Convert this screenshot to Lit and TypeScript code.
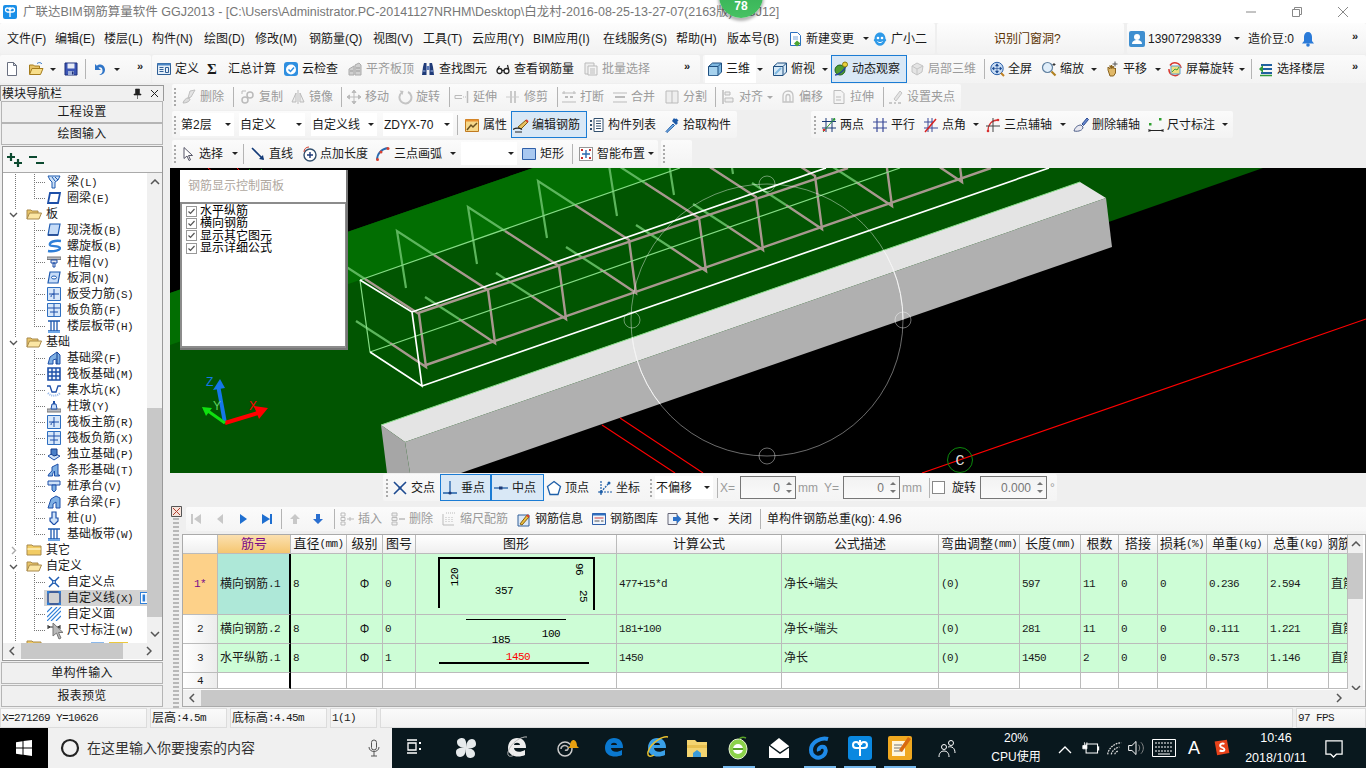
import { LitElement, html, css, svg } from 'lit';
import { customElement } from 'lit/decorators.js';

type Item = {
  x: number; ic?: string; t?: string; dd?: boolean; dis?: boolean; sel?: boolean; sep?: boolean;
  grip?: boolean; box?: string; bw?: number; input?: string; check?: boolean; label?: string; more?: boolean; cls?: string;
};
type Block = { from: number; to: number; plain?: boolean; items: Item[] };

const ICONS: Record<string, unknown> = {
  new: svg`<path d="M3.500 1.500h6l3 3v10h-9z" fill="#fff" stroke="#6a7080"/><path d="M9.500 1.500v3h3z" fill="#d8dce8" stroke="#6a7080"/>`,
  open: svg`<path d="M1.500 13V4h4l1 1h5v2" fill="#e6c268" stroke="#a57c1c"/><path d="M1.500 13.500l2.500-6h11l-2.500 6z" fill="#f7de8a" stroke="#a57c1c"/><path d="M9 2.500c2-1.500 4-1 5 .5" fill="none" stroke="#3a7ac8"/>`,
  save: svg`<path d="M2 2h12v12H2z" fill="#3b55b5" stroke="#1d2e78"/><path d="M4.500 2.500h7v5h-7z" fill="#e8ecf6"/><path d="M5 10h6v4H5z" fill="#9fb0d8"/><path d="M9 10.500h1.500v3H9z" fill="#1d2e78"/>`,
  undo: svg`<path d="M4 3v6h6L7.500 6.800C9.500 5.500 12 7 11.500 10.500c-.3 1.800-2 3-3.500 3.500 3.500.5 6-2.200 6-5.200 0-4.800-5-7-8.200-4z" fill="#2f75c8"/>`,
  def: svg`<path d="M1.500 2.500h13v11h-13z" fill="#e4eef8" stroke="#2f5f96"/><path d="M1.500 2.500h13v2h-13z" fill="#4a86c5"/><path d="M3.500 6.500h4M3.500 8.500h4M3.500 10.500h4M9.500 6.500h3v5h-3z" fill="none" stroke="#2f5f96"/>`,
  cloud: svg`<rect x="1" y="1" width="14" height="14" rx="3" fill="#2f8fe0"/><circle cx="8" cy="8.500" r="5" fill="#fff"/><path d="M5.500 8.500l2 2 3.500-4" fill="none" stroke="#2f8fe0" stroke-width="1.500"/>`,
  flat: svg`<path d="M2 14V8l5-3v9zM8 14V4l4-2 2 2v10z" fill="#d0d0d0" stroke="#aaa"/><path d="M3 10h3M9 7h4M9 10h4" stroke="#999"/>`,
  binoc: svg`<path d="M2 14l1-8 1-4h2.500v12zM14 14l-1-8-1-4H9.500v12z" fill="#1f3a78"/><path d="M6.500 5h3v4h-3z" fill="#5d7ab8"/><path d="M3 10h2.500M10.500 10H13" stroke="#9fb8e8"/>`,
  glasses: svg`<circle cx="4.500" cy="10" r="2.500" fill="#fff" stroke="#222" stroke-width="1.300"/><circle cx="11.500" cy="10" r="2.500" fill="#fff" stroke="#222" stroke-width="1.300"/><path d="M7 9.500h2M2.500 8l2-3M13.500 8l-1-4" fill="none" stroke="#222" stroke-width="1.200"/>`,
  batch: svg`<path d="M2 2h9v11H2z" fill="#eee" stroke="#bbb"/><path d="M5 5h9v9H5z" fill="#f4f4f4" stroke="#bbb"/><path d="M7 8h5M7 10h5M7 12h5" stroke="#bbb"/>`,
  cube: svg`<path d="M1.500 5.500l4-3.500h9v9l-3.500 3.500h-9.500z" fill="#7fb8e0" stroke="#1f4f80"/><path d="M2 6h8.800v8.200H2z" fill="#a6d2ee"/><path d="M1.500 5.500h9.500v9M11 5.500l3.500-3.500" fill="none" stroke="#1f4f80"/>`,
  top: svg`<path d="M1.500 5.500l4-3.500h9v9l-3.500 3.500h-9.500z" fill="#d6e8f6" stroke="#1f4f80"/><path d="M3 13l6-6" stroke="#7fb8e0" stroke-width="2"/><path d="M1.500 5.500h9.500v9M11 5.500l3.500-3.500" fill="none" stroke="#1f4f80"/>`,
  orbit: svg`<circle cx="7" cy="9" r="5" fill="#4f9c2f" stroke="#1f6020"/><path d="M2 14c4 0 10-5 12-11" fill="none" stroke="#1f3fa0" stroke-width="1.400"/><circle cx="12" cy="3.500" r="2.500" fill="#e8d03a" stroke="#8a7a10"/>`,
  local3d: svg`<path d="M3 5l5-3 6 3-1 6-5 3-5-3z" fill="#e4e4e4" stroke="#c4c4c4"/><path d="M3 5l5 3 6-3M8 8v6" fill="none" stroke="#c4c4c4"/>`,
  zoomall: svg`<circle cx="8" cy="7.500" r="6.200" fill="#c8dcf4" stroke="#2a5fa8"/><path d="M8 3v9M3.500 7.500h9M8 2.800L6.500 5h3zM8 12.200L6.500 10h3zM3.200 7.500L5 6v3zM12.800 7.500L11 6v3z" fill="#1d4a90" stroke="#1d4a90" stroke-width=".6"/><path d="M12 12l3 3" stroke="#c08020" stroke-width="2"/>`,
  zoom: svg`<circle cx="6.500" cy="6.500" r="5" fill="#e0eefa" stroke="#6080a0" stroke-width="1.200"/><path d="M10.500 10.500l4 4" stroke="#b08020" stroke-width="2.200"/><path d="M13 2v3M11.500 3.500h3" stroke="#333"/>`,
  pan: svg`<path d="M4 9V6l2 2V4.500l1.500 3V4l1.500 3.500V5l1.500 3 1-1v5l-2 3H6z" fill="#e0b868" stroke="#8a6420"/><path d="M11 .5v5M8.500 3h5" stroke="#555"/>`,
  rotate: svg`<path d="M3 4.500A6 6 0 0 1 14 7" fill="none" stroke="#d83a30" stroke-width="1.500"/><path d="M2 8a6 6 0 0 0 10 5" fill="none" stroke="#d83a30" stroke-width="1.500"/><path d="M4 5h9v8H4z" fill="#f0e080" stroke="#58a0d0"/><path d="M5 11l3-3 2 1 2-3" fill="none" stroke="#40a040"/>`,
  floor: svg`<path d="M3 4h11M3 8h11M3 12h11" stroke="#1f5fa0" stroke-width="2"/><path d="M1 8l4-4v8z" fill="#2f9a3a"/><path d="M2 14.500h12" stroke="#2f9a3a" stroke-width="1.500"/>`,
  doc: svg`<path d="M3.500 1.500h7l3 3v10h-10z" fill="#fff" stroke="#2a70c0"/><path d="M6 6h5M6 8h5" stroke="#7ba8dc"/><path d="M10 9.500l3.500 3-3.500 3-3-3z" fill="#4ea530"/>`,
  xiao: svg`<path d="M2.500 8c0-4 2.500-6.500 5.500-6.500S13.500 4 13.500 8c1 .5 1 2-.3 2.500C12.500 13 10.500 14.800 8 14.800s-4.500-1.800-5.200-4.300C1.500 10 1.500 8.500 2.500 8z" fill="#2f9ae8"/><circle cx="6" cy="7" r="1.300" fill="#fff"/><circle cx="10" cy="7" r="1.300" fill="#fff"/><path d="M5.500 10.500c1.500 1.500 3.500 1.500 5 0" fill="none" stroke="#fff"/>`,
  user: svg`<rect x="0" y="0" width="16" height="16" rx="2" fill="#3f8fd0"/><circle cx="8" cy="6" r="3" fill="#fff"/><path d="M3 13c0-3 2.500-4 5-4s5 1 5 4z" fill="#fff"/>`,
  bell: svg`<path d="M8 1c-2.500 0-4 2-4 5v4l-2 2.500h12L12 10V6c0-3-1.500-5-4-5z" fill="#2a7ad8"/><circle cx="8" cy="14" r="1.800" fill="#2a7ad8"/>`,
  del: svg`<path d="M9 2l5-1-4 7-3 1z" fill="#e4e4e4" stroke="#c0c0c0"/><path d="M2 14c1-3 3-5 5-5l2 1c0 2-3 4-7 4z" fill="#ddd" stroke="#bbb"/>`,
  copy: svg`<circle cx="5" cy="11" r="3" fill="none" stroke="#bbb" stroke-width="1.500"/><circle cx="10" cy="6" r="3" fill="none" stroke="#bbb" stroke-width="1.500"/><path d="M2 2h4M2 2v3" stroke="#bbb"/>`,
  mirror: svg`<path d="M8 1v14" stroke="#bbb"/><path d="M6 4v9H2zM10 4v9h4z" fill="#eee" stroke="#bbb"/>`,
  move: svg`<path d="M8 1v14M1 8h14M8 1L6 3.500h4zM8 15l-2-2.500h4zM1 8l2.500-2v4zM15 8l-2.500-2v4z" fill="#bbb" stroke="#bbb"/>`,
  rot: svg`<path d="M5 3.500A6 6 0 1 0 11 3" fill="none" stroke="#c4c4c4" stroke-width="2"/><path d="M2.500 1.500l4 .5-1 4z" fill="#c4c4c4"/>`,
  ext: svg`<path d="M1 6.500h7M1 9.500h7M1 6.500v3" fill="none" stroke="#bbb"/><path d="M13.500 2v12" stroke="#bbb" stroke-width="1.500"/><path d="M9 8h3" stroke="#bbb" stroke-dasharray="1 1"/>`,
  trim: svg`<path d="M6 2v12M10 2v12" stroke="#bbb" stroke-width="1.500"/><path d="M1 8h13" stroke="#ccc"/>`,
  brk: svg`<path d="M1 4h14M1 13h14" stroke="#bbb"/><path d="M4 8h3M9 8h3" stroke="#bbb" stroke-width="2"/><path d="M3 2v3M13 2v3" stroke="#bbb"/>`,
  merge: svg`<path d="M1 4h14M1 13h14" stroke="#bbb"/><path d="M3 8h10" stroke="#bbb" stroke-width="2"/>`,
  split: svg`<path d="M2 2h12v12H2zM8 2v12" fill="#eee" stroke="#bbb"/>`,
  align: svg`<path d="M3 1v14" stroke="#bbb" stroke-width="1.500"/><path d="M5 3h5v3H5zM5 9h8v4H5z" fill="#eee" stroke="#bbb"/>`,
  offset: svg`<path d="M3 13V7c0-3 2-5 5-5s5 2 5 5v6zM6 13V8c0-1.500.8-2.500 2-2.500S10 6.500 10 8v5" fill="none" stroke="#c4c4c4" stroke-width="1.300"/>`,
  stretch: svg`<path d="M3 1.500h7l3 3v10H3z" fill="#f4f4f4" stroke="#bbb"/><path d="M5 8h5M5 11h5" stroke="#bbb"/>`,
  grippt: svg`<path d="M6 10l6-8 2 2-6 8z" fill="#e4e4e4" stroke="#c4c4c4"/><path d="M1 14h3M6 14h2M10 14h3" stroke="#bbb" stroke-width="1.500"/>`,
  attr: svg`<path d="M1.500 2.500h13v12h-13z" fill="#f6d88a" stroke="#c07a20"/><path d="M1.500 2.500h13v2h-13z" fill="#e89030"/><path d="M3 13l4-5 2 2 4-4" fill="none" stroke="#6a5020" stroke-width="1.500"/>`,
  edit: svg`<path d="M5 10l8-7 2 2-7 7z" fill="#e8c060" stroke="#7a5a10"/><path d="M13 3l2 2" stroke="#d84030" stroke-width="2"/><path d="M0 12.500c3-2 7-1.500 9 0M2 15h7" fill="none" stroke="#222" stroke-width="1.200"/>`,
  list: svg`<path d="M5 1.500h9v13H5z" fill="#fff" stroke="#33506e"/><path d="M7 4h5M7 6.500h5M7 9h5M7 11.500h5" stroke="#33506e"/><path d="M1 3h2v2H1zM1 7h2v2H1zM1 11h2v2H1z" fill="#33506e"/>`,
  pick: svg`<path d="M9 7l-7 7.500 1 1L10.500 8.500z" fill="#7fb8e8" stroke="#1d5aa8"/><path d="M8 4l4 4 2-2-1-1 1.500-1.500-2-2L11 2 10 1z" fill="#1d5aa8"/>`,
  twop: svg`<path d="M1 4.500h14M1 11h14M5 1v14M11 1v14" stroke="#1d3a78"/><path d="M2 15L14 1" stroke="#2f9a3a"/><circle cx="3" cy="13" r="1.300" fill="#d83030"/><circle cx="13" cy="2.500" r="1.300" fill="#2f9a3a"/>`,
  par: svg`<path d="M1 5h14M1 11h14M5 1v14M11 1v14" stroke="#3a4a98" stroke-width="1.200"/>`,
  angle: svg`<path d="M1 5h9M1 11h14M5 1v14M9 1v14" stroke="#3a4a98"/><path d="M2 15L13 2" stroke="#d82020" stroke-width="1.500"/>`,
  arcaux: svg`<path d="M3 14C3 7 7 3 13 3" fill="none" stroke="#d83030" stroke-width="1.300"/><path d="M8 1v14M1 9h14" stroke="#444"/><circle cx="3" cy="14" r="1.300" fill="#d83030"/><circle cx="13" cy="3" r="1.300" fill="#d83030"/>`,
  delaux: svg`<path d="M9 7l5-6 1.500 1.500-5 6z" fill="#6a8ad0" stroke="#2a4a90"/><path d="M1 14c1-4 4-6 7-6l2 2c0 3-4 5-9 4z" fill="#e8e8f0" stroke="#50608a"/>`,
  dimen: svg`<path d="M1 12v3M15 12v3M1 13.500h14" stroke="#222"/><path d="M1 13.500l2-1v2zM15 13.500l-2-1v2z" fill="#222"/><rect x="1" y="6" width="2.500" height="2.500" fill="#2fa030"/><rect x="11" y="1" width="2.500" height="2.500" fill="#2fa030"/>`,
  select: svg`<path d="M4 1.500v11l3-2.500 2 4.500 1.500-.7-2-4.300h4z" fill="#fff" stroke="#556"/>`,
  line: svg`<path d="M2 2l11 11" stroke="#123a78" stroke-width="1.600"/><path d="M14 14l-1-5-4 4z" fill="#123a78"/>`,
  addlen: svg`<circle cx="9" cy="9" r="6" fill="#fff" stroke="#33506e" stroke-width="1.400"/><path d="M9 6v6M6 9h6" stroke="#1d3a78" stroke-width="1.400"/><path d="M3 6C3 3 5 1 8 1" fill="none" stroke="#d04030"/>`,
  arc3: svg`<path d="M2 14C2 8 6 3 13 2" fill="none" stroke="#2a6ab0" stroke-width="1.800"/><circle cx="2.500" cy="13.500" r="1.500" fill="#d84030"/><circle cx="6" cy="6" r="1.500" fill="#d84030"/><circle cx="13" cy="2.500" r="1.500" fill="#d84030"/>`,
  rect: svg`<path d="M1.500 2.500h13v11h-13z" fill="#a9c8f0" stroke="#2f5fa8"/>`,
  smart: svg`<path d="M1.500 1.500h13v13h-13z" fill="#fff" stroke="#333" stroke-dasharray="1 1"/><path d="M8 4v8M4 8h8" stroke="#2a6ab0" stroke-width="1.400"/><path d="M3 3h2v2H3zM11 3h2v2h-2zM3 11h2v2H3zM11 11h2v2h-2z" fill="#c83030"/>`,
  cross: svg`<path d="M2 2l12 12M14 2L2 14" stroke="#1d4a90" stroke-width="1.600"/><circle cx="8" cy="8" r="1.500" fill="#1d4a90"/>`,
  perp: svg`<path d="M8 1v12M1 13h14" stroke="#1f5fa8" stroke-width="1.300"/><circle cx="8" cy="13" r="1.600" fill="#1d3a78"/>`,
  mid: svg`<path d="M1 8h14" stroke="#1f5fa8" stroke-width="1.300"/><rect x="6" y="6.500" width="3.500" height="3" fill="#1d3a78"/>`,
  vertex: svg`<path d="M8 1.500l6.500 5-2.500 8H4l-2.500-8z" fill="#fff" stroke="#1f5fa8" stroke-width="1.300"/>`,
  coord: svg`<path d="M4 1v14M1 12h14M4 12l8-9" stroke="#1f5fa8" stroke-width="1.200" stroke-dasharray="2 1"/><circle cx="4" cy="12" r="1.500" fill="#1f5fa8"/><circle cx="12" cy="3" r="1.500" fill="#1f5fa8"/>`,
  first: svg`<path d="M3 3h2v10H3zM13 3v10L6 8z" fill="#c8c8c8"/>`,
  prev: svg`<path d="M11 3v10L5 8z" fill="#c8c8c8"/>`,
  next: svg`<path d="M5 3v10l7-5z" fill="#1f6fd0"/>`,
  last: svg`<path d="M3 3v10l8-5zM11 3h2v10h-2z" fill="#1f6fd0"/>`,
  up: svg`<path d="M8 3L3 8h3v5h4V8h3z" fill="#c8c8c8"/>`,
  down: svg`<path d="M6 3v5H3l5 5 5-5h-3V3z" fill="#2a6fd0"/>`,
  ins: svg`<path d="M2 2h4v3H2zM2 6.500h4v3H2zM2 11h4v3H2z" fill="none" stroke="#bbb"/><path d="M8 8h7M11 6v4" stroke="#bbb"/>`,
  del2: svg`<path d="M2 2h5v3H2zM2 6.500h5v3H2zM2 11h5v3H2z" fill="#eee" stroke="#bbb"/><path d="M9 8h6" stroke="#bbb" stroke-width="1.500"/>`,
  scale: svg`<path d="M2 3v11h11" fill="none" stroke="#bbb"/><path d="M5 2h9M5 11V5M8 11V5M11 11V5" stroke="#bbb" stroke-dasharray="1 1"/>`,
  info: svg`<path d="M2 4h11v11H2z" fill="#dce8f6" stroke="#33609a"/><path d="M4 13l7-9 2 2-7 8z" fill="#f0c040" stroke="#806010"/><path d="M11 4l2 2" stroke="#d84030" stroke-width="2"/>`,
  lib: svg`<path d="M1.500 2.500h13v11h-13z" fill="#f0f4fa" stroke="#2f5fa8"/><path d="M1.500 2.500h13v2h-13z" fill="#2f6fc0"/><path d="M3.500 7h9" stroke="#d04040"/><path d="M3.500 10h5M10 10h2.500" stroke="#555"/>`,
  other: svg`<path d="M2 2.500h9v11H2z" fill="#eef2f8" stroke="#667"/><path d="M7 6h4V3.500L15.500 8 11 12.500V10H7z" fill="#2a70c8"/>`,
};

const T_ICONS: Record<string, unknown> = {
  beam: svg`<path d="M1 1h12l-2 4-3 2v6H5V7L3 5z" fill="#cfe2f8" stroke="#1d5ab0"/><path d="M5 2l3 4M8 2l3 3" stroke="#1d5ab0"/>`,
  ring: svg`<path d="M3 2h10l-2 10H1z" fill="#fff" stroke="#1d4fa8" stroke-width="1.800"/>`,
  slab: svg`<path d="M3 1h10l-2 11H1z" fill="#c6dcf8" stroke="#1d5ab0" stroke-width="1.200"/><path d="M1 12h10" stroke="#123a88" stroke-width="1.500"/>`,
  spiral: svg`<path d="M14 2C8 1 2 3 3 6c1 2 9 0 10 3 .5 2-6 4-12 3" fill="none" stroke="#2f7fd8" stroke-width="2.400"/>`,
  cap: svg`<path d="M0 2h14v2.500H0z" fill="#b8bcc4" stroke="#777"/><path d="M4 5h6v3H4zM6 8h2v4H6z" fill="#e8e8f0" stroke="#1d4fa8"/>`,
  hole: svg`<path d="M3 1h10l-2 11H1z" fill="#c6dcf8" stroke="#1d5ab0" stroke-width="1.200"/><ellipse cx="7" cy="6.500" rx="2.500" ry="1.500" fill="#fff" stroke="#1d5ab0"/>`,
  rb: svg`<path d="M.5.500h13v13H.5z" fill="#d8e8fa" stroke="#2f6fc0"/><path d="M7 2v10M2 7h10M4 10c0-2 1-3 3-3" fill="none" stroke="#1d4fa8"/>`,
  rn: svg`<path d="M.5.500h13v13H.5z" fill="#d8e8fa" stroke="#2f6fc0"/><path d="M7 1v12M1 5h12M3 9h8" fill="none" stroke="#1d4fa8"/>`,
  band: svg`<path d="M1 2h12M1 12h12M4 2v10M10 2v10M7 2v10" stroke="#1d5ab0" stroke-width="1.300"/><path d="M1 13h12" stroke="#6fa8e8" stroke-width="2"/>`,
  fb: svg`<path d="M1 13l2-7 7-5 3 3v9H9V8L6 9v4z" fill="#7fb0e4" stroke="#1d4fa8"/><path d="M10 1v12" stroke="#123a88"/>`,
  raft: svg`<path d="M1 1h12v12H1z" fill="#eef4fc" stroke="#1d4fa8" stroke-width="1.600"/><path d="M1 5h12M1 9h12M5 1v12M9 1v12" stroke="#1d4fa8" stroke-width="1.400"/>`,
  pit: svg`<path d="M0 3h3l2 6h4l2-6h3" fill="none" stroke="#1d4fa8" stroke-width="1.300"/><path d="M1 10c3 3.500 9 3.500 12 0" fill="none" stroke="#8fb4e8" stroke-width="2" stroke-dasharray="1 1"/>`,
  pier: svg`<path d="M0 10h14v3H0z" fill="#b8bcc4" stroke="#777"/><path d="M4 10l1-5h4l1 5z" fill="#c6dcf8" stroke="#1d4fa8"/><path d="M6 5V2h2v3" fill="#1d4fa8"/>`,
  found: svg`<path d="M1 9l5-3 7 3-6 4z" fill="#cfe2f8" stroke="#1d4fa8"/><path d="M4 7V2h6v6l-3 1z" fill="#4a7fc8" stroke="#123a88"/>`,
  strip: svg`<path d="M1 13c1-3 3-4 4-5V4l6-3v11h1.500v1h-5V8c-1 1-2 2-2 5z" fill="#7fb0e4" stroke="#1d4fa8"/>`,
  pcap: svg`<path d="M1 2h12v4H1z" fill="#cfe2f8" stroke="#1d4fa8"/><path d="M5 6h4v5l-2 2-2-2z" fill="#7fb0e4" stroke="#1d4fa8"/>`,
  cb: svg`<path d="M1 13l3-9 5-3 4 2v10H9V7l-3 2v4z" fill="#7fb0e4" stroke="#1d4fa8"/>`,
  pile: svg`<path d="M5 1h4v6h2v3l-4 4-4-4V7h2z" fill="#cfe2f8" stroke="#1d4fa8" stroke-width="1.200"/>`,
  pt: svg`<path d="M2 2l10 10M12 2L2 12" stroke="#1d5ab0" stroke-width="1.500"/><circle cx="7" cy="7" r="1.500" fill="#d8e8fa" stroke="#1d5ab0"/>`,
  ln: svg`<path d="M1 1h12v12H1z" fill="none" stroke="#123a88" stroke-width="1.300"/><path d="M0 0h2.500v2.500H0zM11.500 0H14v2.500h-2.500zM0 11.500h2.500V14H0zM11.500 11.500H14V14h-2.500z" fill="#2f7fd8"/>`,
  fc: svg`<path d="M0 5L5 0M0 10L10 0M0 14L14 0M4 14L14 4M9 14l5-5" stroke="#2f7fd8" stroke-width="1.200"/>`,
  dm: svg`<path d="M1 2v4M13 2v4M1 4h12" stroke="#222"/><path d="M1 4l2-1v2zM13 4l-2-1v2z" fill="#222"/>`,
  col: svg`<path d="M.5.500h13v13H.5z" fill="#fff" stroke="#2f7fd8" stroke-width="1.200"/><path d="M3 3h3v8H3zM8 3h3v8H8z" fill="#2f7fd8"/>`,
};

type TreeNode = { n: string; g?: boolean; ic?: string; open?: boolean; last?: boolean };
const TREE: TreeNode[] = [
  { n: '梁(L)', ic: 'beam' }, { n: '圈梁(E)', ic: 'ring', last: true },
  { n: '板', g: true, open: true },
  { n: '现浇板(B)', ic: 'slab' }, { n: '螺旋板(B)', ic: 'spiral' }, { n: '柱帽(V)', ic: 'cap' }, { n: '板洞(N)', ic: 'hole' },
  { n: '板受力筋(S)', ic: 'rb' }, { n: '板负筋(F)', ic: 'rn' }, { n: '楼层板带(H)', ic: 'band', last: true },
  { n: '基础', g: true, open: true },
  { n: '基础梁(F)', ic: 'fb' }, { n: '筏板基础(M)', ic: 'raft' }, { n: '集水坑(K)', ic: 'pit' }, { n: '柱墩(Y)', ic: 'pier' },
  { n: '筏板主筋(R)', ic: 'rb' }, { n: '筏板负筋(X)', ic: 'rn' }, { n: '独立基础(P)', ic: 'found' }, { n: '条形基础(T)', ic: 'strip' },
  { n: '桩承台(V)', ic: 'pcap' }, { n: '承台梁(F)', ic: 'cb' }, { n: '桩(U)', ic: 'pile' }, { n: '基础板带(W)', ic: 'band', last: true },
  { n: '其它', g: true },
  { n: '自定义', g: true, open: true },
  { n: '自定义点', ic: 'pt' }, { n: '自定义线(X)', ic: 'ln' }, { n: '自定义面', ic: 'fc' }, { n: '尺寸标注(W)', ic: 'dm', last: true },
];

const TOOL1: Block[] = [
  { from: 0, to: 151, items: [{ x: 2, ic: 'new' }, { x: 26, ic: 'open' }, { x: 49, dd: true }, { x: 61, ic: 'save' }, { x: 85, sep: true }, { x: 89, ic: 'undo' }, { x: 113, dd: true }, { x: 137, more: true }] },
  { from: 152, to: 700, items: [
    { x: 154, ic: 'def', t: '定义' }, { x: 207, label: 'Σ', cls: 'sigma' }, { x: 228, label: '汇总计算' }, { x: 281, ic: 'cloud', t: '云检查' },
    { x: 345, ic: 'flat', t: '平齐板顶', dis: true }, { x: 418, ic: 'binoc', t: '查找图元' }, { x: 493, ic: 'glasses', t: '查看钢筋量' },
    { x: 581, ic: 'batch', t: '批量选择', dis: true }, { x: 684, more: true }] },
  { from: 703, to: 1366, items: [
    { x: 705, ic: 'cube', t: '三维', cls: 'lit' }, { x: 756, dd: true }, { x: 770, ic: 'top', t: '俯视' }, { x: 821, dd: true },
    { x: 831, ic: 'orbit', t: '动态观察', sel: true }, { x: 907, ic: 'local3d', t: '局部三维', dis: true }, { x: 984, sep: true },
    { x: 987, ic: 'zoomall', t: '全屏' }, { x: 1039, ic: 'zoom', t: '缩放' }, { x: 1090, dd: true }, { x: 1102, ic: 'pan', t: '平移' },
    { x: 1154, dd: true }, { x: 1165, ic: 'rotate', t: '屏幕旋转' }, { x: 1238, dd: true }, { x: 1251, sep: true },
    { x: 1256, ic: 'floor', t: '选择楼层' }, { x: 1352, more: true }] },
];

const TOOL2: Block[] = [{ from: 172, to: 961, items: [
  { x: 174, grip: true }, { x: 179, ic: 'del', t: '删除', dis: true }, { x: 233, sep: true }, { x: 238, ic: 'copy', t: '复制', dis: true }, { x: 288, ic: 'mirror', t: '镜像', dis: true },
  { x: 341, sep: true }, { x: 344, ic: 'move', t: '移动', dis: true }, { x: 395, ic: 'rot', t: '旋转', dis: true }, { x: 449, sep: true },
  { x: 452, ic: 'ext', t: '延伸', dis: true }, { x: 503, ic: 'trim', t: '修剪', dis: true }, { x: 557, sep: true }, { x: 559, ic: 'brk', t: '打断', dis: true },
  { x: 610, ic: 'merge', t: '合并', dis: true }, { x: 662, ic: 'split', t: '分割', dis: true }, { x: 715, sep: true }, { x: 718, ic: 'align', t: '对齐', dis: true }, { x: 766, dd: true, dis: true },
  { x: 778, ic: 'offset', t: '偏移', dis: true }, { x: 829, ic: 'stretch', t: '拉伸', dis: true }, { x: 883, sep: true }, { x: 886, ic: 'grippt', t: '设置夹点', dis: true },
] }];

const TOOL3: Block[] = [
  { from: 172, to: 737, items: [
    { x: 174, grip: true }, { x: 180, box: '第2层', bw: 54 }, { x: 239, box: '自定义', bw: 66 }, { x: 311, box: '自定义线', bw: 66 }, { x: 383, box: 'ZDYX-70', bw: 70 }, { x: 457, sep: true },
    { x: 462, ic: 'attr', t: '属性' }, { x: 511, ic: 'edit', t: '编辑钢筋', sel: true }, { x: 587, ic: 'list', t: '构件列表' }, { x: 662, ic: 'pick', t: '拾取构件' }] },
  { from: 811, to: 1233, items: [
    { x: 814, grip: true }, { x: 819, ic: 'twop', t: '两点' }, { x: 870, ic: 'par', t: '平行' }, { x: 921, ic: 'angle', t: '点角' }, { x: 972, dd: true },
    { x: 983, ic: 'arcaux', t: '三点辅轴' }, { x: 1059, dd: true }, { x: 1071, ic: 'delaux', t: '删除辅轴' }, { x: 1146, ic: 'dimen', t: '尺寸标注' }, { x: 1221, dd: true }] },
];

const TOOL4: Block[] = [
  { from: 172, to: 658, items: [
    { x: 174, grip: true }, { x: 178, ic: 'select', t: '选择' }, { x: 231, dd: true }, { x: 243, sep: true }, { x: 248, ic: 'line', t: '直线' }, { x: 299, ic: 'addlen', t: '点加长度' },
    { x: 373, ic: 'arc3', t: '三点画弧' }, { x: 449, dd: true }, { x: 461, box: '', bw: 56 }, { x: 519, ic: 'rect', t: '矩形' }, { x: 572, sep: true }, { x: 576, ic: 'smart', t: '智能布置' }, { x: 647, dd: true }] },
  { from: 661, to: 692, items: [{ x: 663, grip: true }] },
];

const SNAP: Block[] = [{ from: 383, to: 1057, items: [
  { x: 386, grip: true }, { x: 390, ic: 'cross', t: '交点' }, { x: 440, ic: 'perp', t: '垂点', sel: true }, { x: 491, ic: 'mid', t: '中点', sel: true },
  { x: 544, ic: 'vertex', t: '顶点' }, { x: 595, ic: 'coord', t: '坐标' }, { x: 650, grip: true }, { x: 655, box: '不偏移', bw: 58 }, { x: 717, sep: true },
  { x: 720, label: 'X=', dis: true }, { x: 740, input: '0', bw: 56 }, { x: 798, label: 'mm', dis: true }, { x: 824, label: 'Y=', dis: true }, { x: 843, input: '0', bw: 57 },
  { x: 902, label: 'mm', dis: true }, { x: 929, sep: true }, { x: 932, check: true }, { x: 952, label: '旋转' }, { x: 980, input: '0.000', bw: 67 }, { x: 1050, label: '°', dis: true },
] }];

const BAR: Block[] = [{ from: 184, to: 1366, items: [
  { x: 184, ic: 'first', dis: true }, { x: 208, ic: 'prev', dis: true }, { x: 231, ic: 'next' }, { x: 255, ic: 'last' }, { x: 279, sep: true }, { x: 283, ic: 'up', dis: true }, { x: 306, ic: 'down' },
  { x: 332, sep: true }, { x: 335, ic: 'ins', t: '插入', dis: true }, { x: 386, ic: 'del2', t: '删除', dis: true }, { x: 437, ic: 'scale', t: '缩尺配筋', dis: true },
  { x: 512, ic: 'info', t: '钢筋信息' }, { x: 587, ic: 'lib', t: '钢筋图库' }, { x: 662, ic: 'other', t: '其他' }, { x: 710, dd: true }, { x: 726, label: '关闭' }, { x: 758, sep: true },
  { x: 765, label: '单构件钢筋总重(kg): 4.96' },
] }];

const COLS = [35, 73, 56, 36, 33, 201, 165, 157, 81, 61, 38, 39, 49, 61, 61, 19];
const HEAD = ['', '筋号', '直径(mm)', '级别', '图号', '图形', '计算公式', '公式描述', '弯曲调整(mm)', '长度(mm)', '根数', '搭接', '损耗(%)', '单重(kg)', '总重(kg)', '钢筋'];
const ROWS = [
  ['1*', '横向钢筋.1', '8', 'Φ', '0', '', '477+15*d', '净长+端头', '(0)', '597', '11', '0', '0', '0.236', '2.594', '直筋'],
  ['2', '横向钢筋.2', '8', 'Φ', '0', '', '181+100', '净长+端头', '(0)', '281', '11', '0', '0', '0.111', '1.221', '直筋'],
  ['3', '水平纵筋.1', '8', 'Φ', '1', '', '1450', '净长', '(0)', '1450', '2', '0', '0', '0.573', '1.146', '直筋'],
  ['4', '', '', '', '', '', '', '', '', '', '', '', '', '', '', ''],
];

// stirrup positions along the beam, front bottom corner of each one
const STIRRUPS: [number, number][] = [[426, 367], [495, 343], [566, 319], [636, 293], [706, 271], [763, 250], [822, 229], [892, 206], [962, 182], [1030, 158]];

const TASK_LEFT = [
  { w: 48, k: 'view' }, { w: 52, k: 'wheel' }, { w: 52, k: 'ie0' }, { w: 48, k: 'qq' }, { w: 46, k: 'edge' }, { w: 40, k: 'ie' }, { w: 40, k: 'folder' },
  { w: 42, k: 'ge', on: true }, { w: 40, k: 'mail' }, { w: 40, k: 'g', on: true }, { w: 40, k: 'plus', on: true }, { w: 40, k: 'note', on: true },
];

const EDGE_E = 'M2 12C2 6 6 2 11 2c6 0 9 4 9 10H8c0 4 6 5 11 2v5c-6 3-17 2-17-7zm6-3h6c0-3-6-3-6 0z';
const PETAL = 'M12 12C7 12 3 10 3 6c0-3 3-4 5-4 3 0 5 3 4 10z';

const TASK: Record<string, unknown> = {
  view: svg`<path d="M3 4h10M3 17h10M4 7h8v7H4z" fill="none" stroke="#fff" stroke-width="1.300"/><path d="M15 7h2M15 13h2" stroke="#fff" stroke-width="2"/>`,
  wheel: svg`${[0, 90, 180, 270].map((a) => svg`<path d=${PETAL} fill="#e6eaec" transform="rotate(${a} 12 12)"/>`)}`,
  ie0: svg`<path d=${EDGE_E} fill="#eee"/><path d="M21 1C16 0 5 6 2 16c-1 5 3 5 6 3" fill="none" stroke="#bbb"/>`,
  qq: svg`<circle cx="9" cy="13" r="7" fill="none" stroke="#ccc" stroke-width="1.500"/><path d="M5 13c0-3 4-5 7-2 1 2-1 4-3 3" fill="none" stroke="#bbb" stroke-width="1.500"/><path d="M14 10c0-4 2-6 3.500-6S21 6 21 10l2 2H12z" fill="#e8a010"/>`,
  edge: svg`<path d=${EDGE_E} fill="#0a78d0"/>`,
  ie: svg`<path d=${EDGE_E} fill="#3aa0e8"/><path d="M22 1C17 0 5 6 2 16c-1 5 3 5 6 3" fill="none" stroke="#e8c030" stroke-width="1.500"/>`,
  folder: svg`<path d="M1 4h8l2 2h10v15H1z" fill="#f4d470"/><path d="M1 9h20v3H1z" fill="#e8c050"/><path d="M7 17l4-3 4 3v4H7z" fill="#3a9ad8"/>`,
  ge: svg`<ellipse cx="11" cy="13" rx="9" ry="10" fill="#8cd24a" stroke="#e8f4d0"/><circle cx="11" cy="13" r="5" fill="#fff"/><path d="M6 13h10" stroke="#58a028" stroke-width="2"/><path d="M12 3c2-2 5-2 7-1" fill="none" stroke="#58a028" stroke-width="1.500"/>`,
  mail: svg`<path d="M1 10l10-8 10 8v12H1z" fill="#fff"/><path d="M1 9l11 8 9-6" fill="none" stroke="#09181e" stroke-width="1.500"/>`,
  g: svg`<path d="M20 3C13 1 3 6 3 14c0 6 6 9 10 7 5-2 6-8 3-10-3-1-6 1-5 4" fill="none" stroke="#1e8ae8" stroke-width="4"/>`,
  plus: svg`<rect x="0" y="0" width="24" height="24" rx="3" fill="#0a88e0"/><path d="M12 4v16M12 12H8a3 3 0 1 1 3-3M12 12h4a3 3 0 1 0-3-3" fill="none" stroke="#fff" stroke-width="2"/>`,
  note: svg`<rect x="0" y="0" width="24" height="24" rx="2" fill="#f0a820"/><path d="M4 5h13v15H4z" fill="#fff6dc"/><path d="M6 9h8M6 12h8M6 15h8" stroke="#777"/><path d="M11 14L20 1l3 2-9 13z" fill="#d86a10"/>`,
  people: svg`<circle cx="7" cy="9" r="2.500" fill="none" stroke="#fff"/><path d="M2 19c0-4 2-6 5-6s5 2 5 6" fill="none" stroke="#fff"/><circle cx="14" cy="5" r="2.500" fill="none" stroke="#fff"/><path d="M11 9c4-1 7 1 7 6" fill="none" stroke="#fff"/>`,
  up: svg`<path d="M2 13l6-6 6 6" fill="none" stroke="#fff" stroke-width="1.300"/>`,
  plug: svg`<path d="M5 6h14v11H5z" fill="none" stroke="#fff" stroke-width="1.300"/><path d="M19 9v5h2V9z" fill="#fff"/><path d="M1 8h5v4H1zM3 4v4M6 4v4" fill="#fff" stroke="#fff"/>`,
  wifi: svg`<path d="M3 18C4 11 10 6 18 5M7 18c1-4 4-7 9-8M11 18c0-2 2-3 4-4" fill="none" stroke="#ddd" stroke-width="1.400" stroke-dasharray="2 1"/>`,
  vol: svg`<path d="M2 9h4l5-5v16l-5-5H2z" fill="none" stroke="#fff" stroke-width="1.200"/><path d="M14 8c2 2 2 6 0 8M17 5c4 4 4 10 0 14" fill="none" stroke="#999"/>`,
  kbd: svg`<path d="M.5 3.500h23v17H.5z" fill="none" stroke="#fff"/><path d="M3 7h18M3 11h18M3 15h18" stroke="#fff" stroke-dasharray="2 1"/><path d="M6 18h12" stroke="#fff"/>`,
  sogou: svg`<path d="M2 3l15-2 3 16-15 3z" fill="#e8421a"/><path d="M14 6c-3-1-6 0-5 3 1 2 5 1 5 4 0 2-3 2-6 1" fill="none" stroke="#fff" stroke-width="2.400"/>`,
  bubble: svg`<path d="M2 3h17v14h-6l-3 3-3-3H2z" fill="none" stroke="#fff" stroke-width="1.300"/>`,
};

// splits ascii runs so digits and letters get the narrow mono look of the original
const mix = (s: string) => s.split(/([\x20-\x7e]+)/).filter(Boolean).map((p) => /^[\x20-\x7e]+$/.test(p) ? html`<span class="m">${p}</span>` : p);

const icon = (name: string, size = 16) => html`<svg class="ic" viewBox="0 0 16 16" width=${size} height=${size}>${ICONS[name]}</svg>`;

const folderIcon = (open: boolean) => html`<svg viewBox="0 0 16 14" width="16" height="14">
  ${open
    ? svg`<path d="M1 12V3h4l1 1h6v2" fill="#e8c468" stroke="#a8894a"/><path d="M1 12l2.500-6h12L13 12z" fill="#fbe6a4" stroke="#a8894a"/>`
    : svg`<path d="M1 2h5l1 1h8v9H1z" fill="#f2cc64" stroke="#a8894a"/><path d="M1.500 5h13v2h-13z" fill="#fbe8a8"/>`}
</svg>`;

@customElement('app-root')
export class AppRoot extends LitElement {
  static styles = css`
    :host {
      display: block;
      width: 1366px;
      height: 768px;
      overflow: hidden;
      position: relative;
      background: #efefef;
      font: 12px/16px "Liberation Sans", "Noto Sans CJK SC", sans-serif;
      color: #1a1a1a;
    }
    svg { display: block; flex: none; }
    .title { height: 23px; background: #fff; display: flex; align-items: center; color: #777; white-space: nowrap; }
    .logo { margin: 0 6px 0 3px; }
    .title-text { flex: 1; font-size: 12.500px; overflow: hidden; }
    .winbtn { width: 46px; display: flex; justify-content: center; color: #888; }

    .strip { display: flex; flex: none; background: #efefef; }
    .block { display: flex; align-items: center; background: linear-gradient(#fbfbfb, #f3f3f3); border-radius: 2px; }
    .item { display: flex; align-items: center; flex: none; height: 100%; white-space: nowrap; box-sizing: border-box; }
    .item.iconed { padding-left: 2px; gap: 3px; }
    .item.sel { background: #d9e8f6; box-shadow: inset 0 0 0 1px #1b7cd4; }
    .item.lit { background: #fff; }
    .item.dis { color: #9b9b9b; }
    .arrow { width: 0; height: 0; border: 3px solid transparent; border-top: 3px solid #222; border-bottom: 0; margin-left: 1px; }
    .dis .arrow { border-top-color: #aaa; }
    .sepline { width: 1px; height: 20px; background: #b4b4b4; }
    .gripdots { width: 2px; height: 18px; background: repeating-linear-gradient(to bottom, #aaa 0 2px, transparent 2px 4px); }
    .more { font-size: 11px; font-weight: 700; letter-spacing: -1px; line-height: 12px; margin-top: -6px; color: #222; }
    .sigma { font: 700 15px "Liberation Serif", serif; }
    .dropbox { display: flex; align-items: center; justify-content: space-between; height: 23px; background: #fff; padding: 0 3px 0 1px; box-sizing: border-box; }
    .spin { display: flex; align-items: center; justify-content: flex-end; gap: 6px; height: 23px; box-sizing: border-box; border: 1px solid #777; background: linear-gradient(#f2f2f2, #fafafa); padding-right: 3px; color: #777; font-size: 12px; }
    .spin-btns { display: flex; flex-direction: column; gap: 5px; }
    .spin-up { width: 0; height: 0; border: 3px solid transparent; border-bottom: 3px solid #777; border-top: 0; }
    .spin-dn { width: 0; height: 0; border: 3px solid transparent; border-top: 3px solid #777; border-bottom: 0; }
    .cb { width: 11px; height: 11px; border: 1px solid #888; background: #fff; }

    .menu { height: 31px; }
    .menu .block { background: linear-gradient(#fdfdfd, #f2f2f2); }
    .menu .item { padding: 0; gap: 3px; font-size: 12px; }
    .menu .ask { color: #5a3200; }
    .tool1 { height: 29px; }
    .tool1 .block { margin-top: 1px; height: 28px; }

    .body { display: flex; height: 625px; }
    .left { width: 165px; flex: none; display: flex; flex-direction: column; padding-top: 2px; box-sizing: border-box; }
    .nav-head { height: 16px; width: 164px; display: flex; align-items: center; flex: none; border: 1px solid #999; border-bottom: 0; box-sizing: border-box; justify-content: space-between; padding: 0 4px 0 1px; background: #f0f0f0; }
    .nav-btn { height: 22px; flex: none; margin: 0 2px 0 1px; display: flex; align-items: center; justify-content: center; background: #f0f0f0; box-shadow: inset 0 0 0 1px #b5b5b5; letter-spacing: .3px; }
    .nav-head-r { display: flex; gap: 8px; align-items: center; }
    .nav-gap { height: 1px; flex: none; }
    .tree-box { height: 515px; margin: 0 2px 1px 2px; border: 1px solid #999; box-sizing: border-box; display: flex; flex-direction: column; background: #fff; flex: none; }
    .tree-tools { height: 25px; flex: none; display: flex; align-items: center; gap: 3px; padding-left: 4px; border-bottom: 1px solid #aaa; background: #f6f6f6; }
    .tree-main { height: 470px; display: flex; flex: none; }
    .tree { width: 144px; position: relative; overflow: hidden; padding-top: 1px; flex: none; }
    .row {
      height: 16px; display: flex; align-items: center; white-space: nowrap; padding-left: 41px;
      background:
        repeating-linear-gradient(to bottom, #777 0 1px, transparent 1px 2px) 12px 0 / 1px 100% no-repeat,
        repeating-linear-gradient(to bottom, #777 0 1px, transparent 1px 2px) 31px 0 / 1px 100% no-repeat,
        repeating-linear-gradient(to right, #777 0 1px, transparent 1px 2px) 31px 8px / 12px 1px no-repeat;
    }
    .row.last {
      background:
        repeating-linear-gradient(to bottom, #777 0 1px, transparent 1px 2px) 12px 0 / 1px 100% no-repeat,
        repeating-linear-gradient(to bottom, #777 0 1px, transparent 1px 2px) 31px 0 / 1px 9px no-repeat,
        repeating-linear-gradient(to right, #777 0 1px, transparent 1px 2px) 31px 8px / 12px 1px no-repeat;
    }
    .row.group {
      padding-left: 6px;
      background:
        repeating-linear-gradient(to bottom, #777 0 1px, transparent 1px 2px) 12px 0 / 1px 100% no-repeat;
    }
    .row.sel .lab { background: #d2d2d2; }
    .row .lab { display: flex; align-items: center; height: 16px; padding-left: 3px; gap: 6px; }
    .row.group .lab { padding-left: 0; gap: 4px; }
    .chev { width: 9px; margin-right: 8px; background: #fff; height: 9px; }
    .peek { margin-left: 49px; width: 13px; height: 8px; background: #8ab8ec; }
    .peek.y { margin-left: 5px; width: 19px; background: #ecc83c; }
    .extra { margin-left: 1px; }
    .cursor { position: absolute; left: 49px; top: 449px; }
    .m { font: 11px "Liberation Mono", monospace; letter-spacing: -.6px; }
    .vscroll { width: 15px; flex: none; background: #f0f0f0; display: flex; flex-direction: column; align-items: center; }
    .vscroll .ar { height: 18px; display: flex; align-items: center; justify-content: center; flex: none; }
    .vscroll .sp { flex: none; }
    .vscroll .th { width: 15px; background: #c8c8c8; flex: none; }
    .hscroll { height: 16px; flex: none; background: #f0f0f0; display: flex; align-items: center; }
    .hscroll .th { background: #c8c8c8; height: 100%; flex: none; }
    .hscroll .ar { display: flex; align-items: center; justify-content: center; flex: none; height: 100%; }

    .right { flex: 1; min-width: 0; display: flex; flex-direction: column; }
    .r2 { height: 26px; margin-top: 1px; }
    .r3 { height: 27px; margin-top: 1px; }
    .r4 { height: 27px; margin-top: 2px; }
    .canvas { height: 305px; margin-top: 1px; position: relative; background: #000; flex: none; }
    .ctl { position: absolute; left: 10px; top: 2px; width: 166px; height: 178px; background: #fff; box-shadow: 1px 1px 0 1px #777; box-sizing: border-box; display: flex; flex-direction: column; }
    .ctl-title { height: 32px; flex: none; display: flex; align-items: center; padding-left: 8px; color: #b0a8a0; }
    .ctl-list { flex: 1; border: 2px solid #8c8c8c; border-right-width: 1px; padding: 1px 0 0 4px; color: #000; }
    .ctl-row { height: 12.300px; display: flex; align-items: center; gap: 3px; line-height: 12px; }
    .ctl-row .ck { width: 9px; height: 9px; border: 1px solid #999; flex: none; display: flex; }
    .snap { height: 27px; margin-top: 1px; }
    .snap .block { background: linear-gradient(#f9f9f9, #f4f4f4); }
    .lower { flex: 1; display: flex; margin-top: 3px; min-height: 0; }
    .lgrip { width: 12px; flex: none; display: flex; flex-direction: column; align-items: center; gap: 1px; padding-top: 2px; }
    .lgrip .dots { flex: 1; width: 6px; background: repeating-linear-gradient(to bottom, #b8b8b8 0 2px, transparent 2px 4px); }
    .lmain { flex: 1; min-width: 0; display: flex; flex-direction: column; }
    .bar { height: 24px; margin-top: 3px; margin-left: 2px; }
    .bar .block { background: linear-gradient(#fbfbfb, #f5f5f5); }
    .tbl { margin-top: 3px; height: 173px; border: 1px solid #aaa; box-sizing: border-box; background: #fff; display: flex; flex-direction: column; flex: none; }
    .tbl-main { display: flex; height: 155px; flex: none; }
    .grid { display: grid; flex: none; width: 1165px; height: 154px; overflow: hidden; }
    .c { box-sizing: border-box; border-right: 1px solid #bbb; border-bottom: 1px solid #bbb; overflow: hidden; display: flex; align-items: center; padding-left: 2px; white-space: nowrap; position: relative; }
    .h { justify-content: center; background: linear-gradient(#fff, #efefef); padding: 0; font-size: 13px; }
    .h.hot { background: linear-gradient(#fbe0b0, #f5c670); color: #7a0a8a; }
    .c.green { background: #cdfdd6; }
    .c.cur { background: #aee8d8; }
    .c.thick { border-right: 2px solid #000; }
    .c.rn { justify-content: center; background: linear-gradient(to right, #fff, #ececec); padding: 0; }
    .c.rn1 { background: #fdd189; color: #7a0a8a; }
    .c.mid { justify-content: center; padding: 0; }
    .c.blank { background: #fff; }
    .shape { position: absolute; left: 0; top: 0; }
    .status { height: 20px; display: flex; gap: 3px; }
    .status div { background: linear-gradient(#fbfbfb, #f1f1f1); box-shadow: inset 0 0 0 1px #dcdcdc; padding-left: 2px; display: flex; align-items: center; box-sizing: border-box; white-space: nowrap; overflow: hidden; }

    .taskbar { height: 40px; display: flex; background: #09181e; color: #fff; }
    .start { width: 48px; background: #000; display: flex; align-items: center; justify-content: center; flex: none; }
    .search { width: 344px; background: #f0f0f0; color: #333; display: flex; align-items: center; flex: none; font-size: 14px; padding-left: 12px; box-sizing: border-box; gap: 7px; }
    .search span { flex: 1; }
    .search svg:last-child { margin-right: 12px; }
    .task { display: flex; align-items: center; justify-content: center; flex: none; height: 40px; }
    .task.on { background: linear-gradient(#76b9ed, #76b9ed) center bottom / 32px 2px no-repeat; }
    .cpu { width: 82px; flex: none; display: flex; flex-direction: column; align-items: center; justify-content: center; line-height: 19px; font-size: 12px; margin-left: 2px; }
    .clock { width: 78px; flex: none; display: flex; flex-direction: column; align-items: center; justify-content: center; line-height: 20px; font-size: 12.500px; }
    .ime { width: 26px; font-size: 18px; display: flex; align-items: center; justify-content: center; flex: none; }

    .ball { position: absolute; left: 719px; top: -26px; width: 44px; height: 44px; border-radius: 50%; background: linear-gradient(#2ea84f, #46c263); box-shadow: 0 2px 3px 1px rgba(0, 0, 0, .3); display: flex; align-items: flex-end; justify-content: center; color: #fff; font-weight: 700; font-size: 12px; padding-bottom: 4px; box-sizing: border-box; }
  `;

  renderItem(it: Item, width: number) {
    if (it.sep) return html`<div class="item" style="width:${width}px"><div class="sepline"></div></div>`;
    if (it.grip) return html`<div class="item" style="width:${width}px"><div class="gripdots"></div></div>`;
    if (it.more) return html`<div class="item" style="width:${width}px"><span class="more">»</span></div>`;
    if (it.dd) return html`<div class="item ${it.dis ? 'dis' : ''}" style="width:${width}px"><div class="arrow"></div></div>`;
    if (it.box !== undefined) {
      return html`<div class="item" style="width:${width}px"><div class="dropbox" style="width:${it.bw}px"><span>${it.box}</span><div class="arrow"></div></div></div>`;
    }
    if (it.input !== undefined) {
      return html`<div class="item" style="width:${width}px"><div class="spin" style="width:${it.bw}px"><span>${it.input}</span><div class="spin-btns"><div class="spin-up"></div><div class="spin-dn"></div></div></div></div>`;
    }
    if (it.check) return html`<div class="item" style="width:${width}px"><div class="cb"></div></div>`;
    if (it.label !== undefined) return html`<div class="item ${it.dis ? 'dis' : ''} ${it.cls ?? ''}" style="width:${width}px">${it.label}</div>`;
    return html`<div class="item iconed ${it.dis ? 'dis' : ''} ${it.sel ? 'sel' : ''} ${it.cls ?? ''}" style="width:${width}px">
      ${it.ic ? icon(it.ic) : ''}${it.t ? html`<span>${it.t}</span>` : ''}
    </div>`;
  }

  // page-x based toolbars: every block and item knows where it starts
  renderStrip(blocks: Block[], origin: number, cls: string) {
    let cur = origin;
    return html`<div class="strip ${cls}">
      ${blocks.map((b) => {
        const gap = b.from - cur;
        cur = b.to;
        return html`<div class="block" style="margin-left:${gap}px;width:${b.to - b.from}px">
          ${b.items.map((it, i) => {
            const first = i === 0 ? it.x - b.from : 0;
            const next = b.items[i + 1]?.x ?? b.to;
            return html`${first ? html`<div style="width:${first}px;flex:none"></div>` : ''}${this.renderItem(it, next - it.x)}`;
          })}
        </div>`;
      })}
    </div>`;
  }

  renderMenu() {
    const names: [number, string][] = [[7, '文件(F)'], [55, '编辑(E)'], [104, '楼层(L)'], [152, '构件(N)'], [204, '绘图(D)'], [255, '修改(M)'], [309, '钢筋量(Q)'], [373, '视图(V)'], [423, '工具(T)'], [472, '云应用(Y)'], [533, 'BIM应用(I)'], [603, '在线服务(S)'], [676, '帮助(H)'], [727, '版本号(B)']];
    const blocks: Block[] = [
      { from: 0, to: 935, items: [...names.map(([x, t]) => ({ x, label: t })), { x: 787, ic: 'doc', t: '新建变更' }, { x: 862, dd: true }, { x: 872, ic: 'xiao', t: '广小二' }] },
      { from: 937, to: 1124, items: [{ x: 994, label: '识别门窗洞?', cls: 'ask' }] },
      { from: 1127, to: 1366, items: [{ x: 1129, ic: 'user', t: '13907298339' }, { x: 1233, dd: true }, { x: 1248, label: '造价豆:0' }, { x: 1300, ic: 'bell' }, { x: 1352, more: true }] },
    ];
    return this.renderStrip(blocks, 0, 'menu');
  }

  renderTree() {
    return html`<div class="tree">
      ${TREE.map((n) => {
        if (n.g) {
          const chev = n.open
            ? svg`<path d="M1 3l3.500 3.500L8 3" fill="none" stroke="#555" stroke-width="1.400"/>`
            : svg`<path d="M3 1l3.500 3.500L3 8" fill="none" stroke="#aaa" stroke-width="1.400"/>`;
          return html`<div class="row group">
            <svg class="chev" viewBox="0 0 9 9" width="9" height="9">${chev}</svg>
            <div class="lab">${folderIcon(!!n.open)}<span>${n.n}</span></div>
          </div>`;
        }
        const sel = n.ic === 'ln';
        return html`<div class="row ${n.last ? 'last' : ''} ${sel ? 'sel' : ''}">
          <div class="lab">
            <svg viewBox="0 0 14 14" width="14" height="14">${T_ICONS[n.ic!]}</svg>
            <span>${mix(n.n)}</span>
            ${sel ? html`<svg class="extra" viewBox="0 0 14 14" width="12" height="12">${T_ICONS.col}</svg>` : ''}
          </div>
        </div>`;
      })}
      <div class="row group">
        <svg class="chev" viewBox="0 0 9 9" width="9" height="9"></svg>
        <div class="lab">${folderIcon(false)}</div>
        <div class="peek"></div><div class="peek y"></div>
      </div>
      <svg class="cursor" viewBox="0 0 12 18" width="12" height="18"><path d="M1 1v13l3.500-3 2.500 6 2-1-2.500-5.500H11z" fill="#b8b8b8" stroke="#777"/></svg>
    </div>`;
  }

  renderScrollV(top: number, thumb: number, trail: number) {
    return html`<div class="vscroll">
      <div class="ar"><svg viewBox="0 0 10 6" width="10" height="6"><path d="M1 5l4-4 4 4" fill="none" stroke="#555" stroke-width="1.500"/></svg></div>
      <div class="sp" style="height:${top}px"></div>
      <div class="th" style="height:${thumb}px"></div>
      <div class="sp" style="height:${trail}px"></div>
      <div class="ar"><svg viewBox="0 0 10 6" width="10" height="6"><path d="M1 1l4 4 4-4" fill="none" stroke="#555" stroke-width="1.500"/></svg></div>
    </div>`;
  }

  renderScrollH(left: number, thumb: number, arrow: number, endGap: number) {
    return html`<div class="hscroll">
      <div class="ar" style="width:${left}px"><svg viewBox="0 0 6 10" width="6" height="10"><path d="M5 1L1 5l4 4" fill="none" stroke="#555" stroke-width="1.500"/></svg></div>
      <div class="th" style="width:${thumb}px"></div>
      <div style="flex:1"></div>
      <div class="ar" style="width:${arrow}px"><svg viewBox="0 0 6 10" width="6" height="10"><path d="M1 1l4 4-4 4" fill="none" stroke="#555" stroke-width="1.500"/></svg></div>
      <div style="width:${endGap}px;flex:none"></div>
    </div>`;
  }

  renderLeft() {
    return html`<div class="left">
      <div class="nav-head">
        <span>模块导航栏</span>
        <span class="nav-head-r">
          <svg viewBox="0 0 9 11" width="9" height="11"><path d="M2.500 1h4v5h1.500v1H1V6h1.500zM4.500 7v4" fill="#222" stroke="#222" stroke-width=".6"/></svg>
          <svg viewBox="0 0 9 9" width="9" height="9"><path d="M1 1l7 7M8 1L1 8" stroke="#222"/></svg>
        </span>
      </div>
      <div class="nav-btn">工程设置</div>
      <div class="nav-btn">绘图输入</div>
      <div class="nav-gap"></div>
      <div class="tree-box">
        <div class="tree-tools">
          <svg viewBox="0 0 18 16" width="18" height="16"><path d="M4 1v8M0 5h8M11 7v8M7 11h8" stroke="#0c4a30" stroke-width="2.200"/></svg>
          <svg viewBox="0 0 18 16" width="18" height="16"><path d="M1 5h8M8 11h8" stroke="#0c4a30" stroke-width="2.200"/></svg>
        </div>
        <div class="tree-main">
          ${this.renderTree()}
          ${this.renderScrollV(217, 209, 8)}
        </div>
        ${this.renderScrollH(18, 102, 26, 0)}
      </div>
      <div class="nav-btn">单构件输入</div>
      <div class="nav-gap"></div>
      <div class="nav-btn">报表预览</div>
    </div>`;
  }

  renderScene() {
    const beamTop = '381,425 1080,182 1106,198 405,442';
    const beamSide = '405,442 1106,198 1112,247 461,473 410,473';
    const beamEnd = '381,425 405,442 410,473 387,473';
    const beamAll = '381,425 1080,182 1106,198 1112,247 461,473 387,473';
    const rebar = '#a8988f';
    const wire = '#86dc86';
    const backGreen = '#5cb55c';
    return svg`
      <defs>
        <clipPath id="overBeam"><polygon points=${beamAll}></polygon></clipPath>
      </defs>
      <rect x="170" y="168" width="1196" height="305" fill="#000"></rect>
      <path d="M208 168l5 4M237 168l5 5" stroke="#f00"></path>
      <path d="M249 169c3 4 10 4 13 0" fill="none" stroke="#0a8a0a"></path>
      <polygon points="170,293 533,168 1263,168 1100,225 420,473 170,473" fill="#015501"></polygon>
      <polygon points="170,293 533,168 680,168 360,280 170,345" fill="#026e02"></polygon>

      ${STIRRUPS.map(([bx, by]) => {
        const tx = bx - 7, ty = by - 53;
        const ax = tx - 91, ay = ty - 59;
        const mx = ax + 37, my = ay + 24;
        const hx = bx - 70, hy = by - 46;
        const nx = hx + 34, ny = hy + 22;
        return svg`
          <path d="M${ax + 9} ${ay + 57}L${ax} ${ay}L${mx} ${my}" fill="none" stroke=${backGreen} stroke-width="2.200"></path>
          <path d="M${hx} ${hy}L${nx} ${ny}" stroke=${backGreen} stroke-width="2.200"></path>
          <path d="M${mx} ${my}L${tx} ${ty}L${bx} ${by}L${nx} ${ny}" fill="none" stroke=${rebar} stroke-width="2.400"></path>
        `;
      })}
      <path d="M360 280L680 168M370 352L900 168" stroke=${wire} stroke-width="1.200"></path>
      <path d="M360 280L370 352" stroke=${wire} stroke-width="1.200"></path>
      <path d="M418 313L848 168M426 365L991 168" stroke=${rebar} stroke-width="2.400"></path>
      <path d="M412 312L826 168M422 386L1049 168M360 280L412 312L422 386L370 352" fill="none" stroke="#fff" stroke-width="1.700"></path>

      <polygon points=${beamTop} fill="#e4e4e4"></polygon>
      <polygon points=${beamSide} fill="#b0b0b0"></polygon>
      <polygon points=${beamEnd} fill="#a6a6a6"></polygon>
      <path d="M381 425L1080 182" stroke="#8ee08e"></path>

      <path d="M620 418L703 473M602 425L675 473M922 473L1366 319" fill="none" stroke="#f00" stroke-width="1.100"></path>
      <g fill="none" stroke="#fff" stroke-opacity=".42">
        <circle cx="767" cy="320" r="136"></circle>
        <circle cx="767" cy="184" r="8"></circle>
        <circle cx="767" cy="456" r="8"></circle>
        <circle cx="632" cy="320" r="8"></circle>
        <circle cx="903" cy="320" r="8"></circle>
      </g>
      <g clip-path="url(#overBeam)"><circle cx="767" cy="320" r="136" fill="none" stroke="#f4f4f4"></circle></g>
      <circle cx="960" cy="460" r="12.500" fill="none" stroke="#0c8a0c"></circle>
      <text x="960" y="465" text-anchor="middle" fill="#ddd" font-family="Liberation Mono" font-size="15">C</text>

      <path d="M225 423L218 385" stroke="#1577e8" stroke-width="4"></path>
      <polygon points="220,379 213,390 225,388" fill="#1577e8"></polygon>
      <path d="M225 423L258 413" stroke="#f00" stroke-width="4"></path>
      <polygon points="268,408 254,406 259,419" fill="#f00"></polygon>
      <path d="M225 423L208 411" stroke="#0fe00f" stroke-width="3"></path>
      <polygon points="202,407 212,408 206,416" fill="#0fe00f"></polygon>
      <text x="206" y="386" fill="#1577e8" font-family="Liberation Sans" font-size="12">Z</text>
      <text x="249" y="410" fill="#f00" font-family="Liberation Sans" font-size="12">X</text>
      <text x="213" y="410" fill="#5fd05f" font-family="Liberation Sans" font-size="12">Y</text>
    `;
  }

  renderCanvas() {
    const checks = ['水平纵筋', '横向钢筋', '显示其它图元', '显示详细公式'];
    return html`<div class="canvas">
      <svg viewBox="170 168 1196 305" width="1196" height="305">${this.renderScene()}</svg>
      <div class="ctl">
        <div class="ctl-title">钢筋显示控制面板</div>
        <div class="ctl-list">
          ${checks.map((c) => html`<div class="ctl-row">
            <span class="ck"><svg viewBox="0 0 9 9" width="9" height="9"><path d="M1.500 4.500l2 2 4-4.500" fill="none" stroke="#555" stroke-width="1.200"/></svg></span>
            <span>${c}</span>
          </div>`)}
        </div>
      </div>
    </div>`;
  }

  renderShape(row: number) {
    if (row === 0) {
      return html`<svg class="shape" viewBox="0 0 201 60" width="201" height="60">
        <path d="M23 54V4H178V56" fill="none" stroke="#000" stroke-width="2"/>
        <text transform="translate(42 23) rotate(-90)" text-anchor="middle" font-size="11" font-family="Liberation Mono" letter-spacing="-.5">120</text>
        <text transform="translate(160 15) rotate(90)" text-anchor="middle" font-size="11" font-family="Liberation Mono" letter-spacing="-.5">96</text>
        <text transform="translate(164 42) rotate(90)" text-anchor="middle" font-size="11" font-family="Liberation Mono" letter-spacing="-.5">25</text>
        <text x="88" y="40" text-anchor="middle" font-size="11" font-family="Liberation Mono" letter-spacing="-.5">357</text>
      </svg>`;
    }
    if (row === 1) {
      return html`<svg class="shape" viewBox="0 0 201 28" width="201" height="28">
        <path d="M50 4.500H150" stroke="#000"/>
        <text x="135" y="22" text-anchor="middle" font-size="11" font-family="Liberation Mono" letter-spacing="-.5">100</text>
        <text x="85" y="28" text-anchor="middle" font-size="11" font-family="Liberation Mono" letter-spacing="-.5">185</text>
      </svg>`;
    }
    if (row === 2) {
      return html`<svg class="shape" viewBox="0 0 201 28" width="201" height="28">
        <path d="M23 19H173" stroke="#000" stroke-width="2"/>
        <text x="102" y="16" text-anchor="middle" font-size="11" fill="#f00" font-family="Liberation Mono" letter-spacing="-.5">1450</text>
      </svg>`;
    }
    return '';
  }

  renderTable() {
    const rowsH = [19, 61, 29, 29, 16];
    return html`<div class="tbl">
      <div class="tbl-main">
        <div class="grid" style="grid-template-columns:${COLS.map((c) => c + 'px').join(' ')};grid-template-rows:${rowsH.map((r) => r + 'px').join(' ')}">
          ${HEAD.map((h, i) => html`<div class="c h ${i === 1 ? 'hot' : ''}">${mix(h)}</div>`)}
          ${ROWS.map((r, ri) => r.map((v, ci) => {
            const filled = ri < 3;
            let cls = filled ? 'green' : 'blank';
            if (ci === 0) cls = ri === 0 ? 'rn rn1' : 'rn';
            if (ci === 1) cls = (ri === 0 ? 'cur' : cls) + ' thick';
            if (ci === 3) cls += ' mid';
            return html`<div class="c ${cls}">${ci === 5 ? this.renderShape(ri) : mix(v)}</div>`;
          }))}
        </div>
        ${this.renderScrollV(0, 46, 80)}
      </div>
      ${this.renderScrollH(18, 749, 18, 17)}
    </div>`;
  }

  renderTaskbar() {
    return html`<div class="taskbar">
      <div class="start"><svg viewBox="0 0 16 16" width="16" height="16"><path d="M0 2.300l6.500-1V7.600H0zM7.500 1.100L16 0v7.600H7.500zM0 8.500h6.500v6.300l-6.500-1zM7.500 8.500H16V16l-8.500-1.200z" fill="#fff"/></svg></div>
      <div class="search">
        <svg viewBox="0 0 20 20" width="20" height="20"><circle cx="10" cy="10" r="8" fill="none" stroke="#222" stroke-width="2.200"/></svg>
        <span>在这里输入你要搜索的内容</span>
        <svg viewBox="0 0 12 18" width="12" height="18"><rect x="3.500" y="1" width="5" height="10" rx="2.500" fill="none" stroke="#555"/><path d="M1 8c0 6 10 6 10 0M6 13v4M3 17h6" fill="none" stroke="#555"/></svg>
      </div>
      ${TASK_LEFT.map((t) => html`<div class="task ${t.on ? 'on' : ''}" style="width:${t.w}px"><svg viewBox="0 0 24 24" width="24" height="24">${TASK[t.k]}</svg></div>`)}
      <div class="task" style="width:53px"><svg viewBox="0 0 20 20" width="20" height="20">${TASK.people}</svg></div>
      <div class="cpu"><span>20%</span><span>CPU使用</span></div>
      <div class="task" style="width:16px"><svg viewBox="0 0 16 16" width="16" height="16">${TASK.up}</svg></div>
      <div class="task" style="width:30px;padding-left:6px;box-sizing:border-box"><svg viewBox="0 0 22 22" width="18" height="18">${TASK.plug}</svg></div>
      <div class="task" style="width:22px"><svg viewBox="0 0 20 22" width="18" height="20">${TASK.wifi}</svg></div>
      <div class="task" style="width:22px"><svg viewBox="0 0 22 24" width="18" height="20">${TASK.vol}</svg></div>
      <div class="task" style="width:34px"><svg viewBox="0 0 24 24" width="24" height="24">${TASK.kbd}</svg></div>
      <div class="ime">A</div>
      <div class="task" style="width:30px"><svg viewBox="0 0 22 22" width="18" height="18">${TASK.sogou}</svg></div>
      <div class="clock"><span>10:46</span><span>2018/10/11</span></div>
      <div class="task" style="width:38px"><svg viewBox="0 0 21 21" width="20" height="20">${TASK.bubble}</svg></div>
    </div>`;
  }

  render() {
    return html`
      <div class="title">
        <svg class="logo" viewBox="0 0 14 14" width="14" height="14"><rect width="14" height="14" rx="2" fill="#1a8fe8"/><path d="M7 2v10M7 7H4.500a2 2 0 1 1 2-2M7 7h2.500a2 2 0 1 0-2-2" fill="none" stroke="#fff" stroke-width="1.300"/></svg>
        <div class="title-text">广联达BIM钢筋算量软件 GGJ2013 - [C:\\Users\\Administrator.PC-20141127NRHM\\Desktop\\白龙村-2016-08-25-13-27-07(2163版).GGJ12]</div>
        <div class="winbtn"><svg viewBox="0 0 10 10" width="10" height="10"><path d="M0 5h10" stroke="#888"/></svg></div>
        <div class="winbtn"><svg viewBox="0 0 10 10" width="10" height="10"><path d="M.5 2.500h7v7h-7zM2.500 2.500v-2h7v7h-2" fill="none" stroke="#888"/></svg></div>
        <div class="winbtn"><svg viewBox="0 0 10 10" width="10" height="10"><path d="M0 0l10 10M10 0L0 10" stroke="#888"/></svg></div>
      </div>
      ${this.renderMenu()}
      ${this.renderStrip(TOOL1, 0, 'tool1')}
      <div class="body">
        ${this.renderLeft()}
        <div style="width:5px;flex:none"></div>
        <div class="right">
          ${this.renderStrip(TOOL2, 170, 'r2')}
          ${this.renderStrip(TOOL3, 170, 'r3')}
          ${this.renderStrip(TOOL4, 170, 'r4')}
          ${this.renderCanvas()}
          ${this.renderStrip(SNAP, 170, 'snap')}
          <div class="lower">
            <div class="lgrip">
              <svg viewBox="0 0 11 11" width="11" height="11"><path d="M.5.500h10v10H.500z" fill="#f6e4dc" stroke="#555"/><path d="M2 2l7 7M9 2L2 9" stroke="#b04030"/></svg>
              <div class="dots"></div>
            </div>
            <div class="lmain">
              ${this.renderStrip(BAR, 182, 'bar')}
              ${this.renderTable()}
            </div>
          </div>
        </div>
      </div>
      <div class="status">
        <div style="width:147px">${mix('X=271269 Y=10626')}</div>
        <div style="width:77px">${mix('层高:4.5m')}</div>
        <div style="width:97px">${mix('底标高:4.45m')}</div>
        <div style="width:47px">${mix('1(1)')}</div>
        <div style="flex:1"></div>
        <div style="width:70px">${mix('97 FPS')}</div>
      </div>
      ${this.renderTaskbar()}
      <div class="ball">78</div>
    `;
  }
}
